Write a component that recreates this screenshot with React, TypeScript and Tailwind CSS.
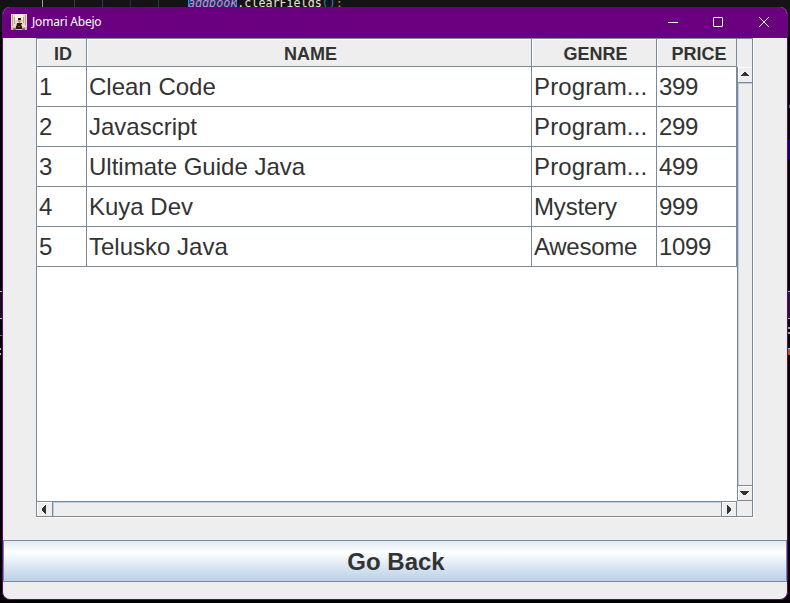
import type { ReactNode } from "react";

const books = [
  { id: 1, name: "Clean Code", genre: "Program...", price: 399, tracking: "tracking-[0.12px]" },
  { id: 2, name: "Javascript", genre: "Program...", price: 299, tracking: "tracking-[0.12px]" },
  { id: 3, name: "Ultimate Guide Java", genre: "Program...", price: 499, tracking: "tracking-[0.12px]" },
  { id: 4, name: "Kuya Dev", genre: "Mystery", price: 999, tracking: "tracking-[-0.15px]" },
  { id: 5, name: "Telusko Java", genre: "Awesome", price: 1099, tracking: "tracking-[-0.28px]" },
];

const columns = "grid grid-cols-[50px_445px_125px_80px]";

function Editor() {
  return (
    <div className="absolute inset-0 bg-black">
      <div className="relative h-8 bg-[#141414]">
        <i className="absolute left-[42px] h-2 w-px bg-[#a0a0a0]" />
        <i className="absolute left-[74px] h-2 w-px bg-[#234a2a]" />
        <i className="absolute left-[102px] h-2 w-px bg-[#1d4468]" />
        <i className="absolute left-[130px] h-2 w-px bg-[#302a55]" />
        <i className="absolute left-[158px] h-2 w-px bg-[#124848]" />
        <div className="absolute left-[188px] top-[-5px] whitespace-pre font-['DejaVu_Sans_Mono',monospace] text-[11.7px] leading-4 text-[#e6e6d0]">
          <span className="bg-[#16334f] italic text-[#d08be8] shadow-[inset_1px_0_#0a9be8,inset_-1px_0_#0a9be8]">addbook</span>.clearFields<span className="text-[#168bb0]">()</span><span className="text-[#d98a52]">;</span>
        </div>
      </div>
      <i className="absolute left-0 top-[291px] h-[28px] w-[2px] border-y border-[#bbb] bg-[#160d20]" />
      <i className="absolute left-0 top-[335px] h-px w-[2px] bg-[#298bb0]" />
      <i className="absolute left-0 top-[348px] h-[7px] w-px border-y-2 border-[#c3bc99]" />
      <i className="absolute right-0 top-[105px] h-[3px] w-px bg-[#49784a]" />
      <i className="absolute right-0 top-[139px] h-5 w-[2px] bg-[#000080]" />
      <i className="absolute right-0 top-[291px] h-7 w-[2px] border-y border-[#bbb] bg-[#221630]" />
      <i className="absolute right-0 top-[327px] h-[7px] w-[2px] border-y-2 border-[#aaa69c]" />
      <i className="absolute right-0 top-[348px] h-[7px] w-[2px] border-t border-[#bbb] bg-[#a65b18]" />
    </div>
  );
}

function TitleBar() {
  return (
    <header className="flex h-[31px] shrink-0 items-start bg-[#6a007f] text-white">
      <svg className="ml-[8px] mt-[7px]" width="16" height="16" viewBox="0 0 16 16" shapeRendering="crispEdges">
        <path fill="#e6dcc4" d="M0 0h16v16H0z" />
        <path fill="#f7f0df" d="M4 0h8v6H4z" />
        <path fill="#b5a68d" d="M1 1h1v11H1zM3 3h1v7H3zM14 1h1v10h-1zM12 3h1v6h-1z" />
        <path fill="#d0baa0" d="M0 13h16v3H0z" />
        <path fill="#8d7260" d="M2 14h3v2H2zM11 14h3v2h-3z" />
        <path fill="#251a1b" d="M7 4h3v2H7zM6 9h5v2H6zM5 11h6v4H5z" />
        <path fill="#ce8a6b" d="M7 6h3v2H7zM8 8h1v1H8zM5 10h1v2H5zM10 10h1v2h-1z" />
        <path fill="#963536" d="M7 12h2v1H7z" />
      </svg>
      <span className="ml-[5px] mt-[7px] font-['Noto_Sans',sans-serif] text-[12px] leading-4 tracking-[-0.2px]">Jomari Abejo</span>
      <svg className="ml-auto mr-[16px] mt-[9px]" width="103" height="12" viewBox="0 0 103 12" fill="none" stroke="white">
        <path d="M0 6.5h10" />
        <rect x="45.5" y="1.5" width="9" height="9" rx=".5" />
        <path d="m91 1 10 10m0-10L91 11" />
      </svg>
    </header>
  );
}

function HeaderCell({ children }: { children: ReactNode }) {
  return (
    <div className="border-b border-r border-[#7a8a99]">
      <div className="flex h-[27px] items-center justify-center border-l border-t border-white pl-[2px] pt-[2px] text-lg font-bold leading-5">{children}</div>
    </div>
  );
}

function Arrow({ d }: { d: string }) {
  return (
    <svg width="13" height="13" viewBox="0 0 13 13" fill="#333" shapeRendering="crispEdges">
      <path d={d} />
    </svg>
  );
}

function BookTable() {
  return (
    <section className="ml-[33px] h-[480px] w-[718px] shrink-0 border-b border-r border-white">
      <div className="flex h-[479px] w-[717px] flex-col border border-[#7a8a99]">
        <div className="flex h-7 shrink-0">
          <div className={`${columns} w-[700px]`}>
            <HeaderCell>ID</HeaderCell>
            <HeaderCell>NAME</HeaderCell>
            <HeaderCell>GENRE</HeaderCell>
            <HeaderCell><span className="pl-[2px]">PRICE</span></HeaderCell>
          </div>
          <div className="flex-1" />
        </div>
        <div className="flex h-[434px] shrink-0">
          <div className="w-[700px] bg-white">
            {books.map((book) => (
              <div key={book.id} className={`${columns} h-10 text-2xl leading-[39px] *:overflow-hidden *:whitespace-nowrap *:border-b *:border-r *:border-[#7a8a99] *:pl-[2px]`}>
                <div>{book.id}</div>
                <div>{book.name}</div>
                <div className={book.tracking}>{book.genre}</div>
                <div className="tracking-[-0.34px]">{book.price}</div>
              </div>
            ))}
          </div>
          <div className="flex w-[15px] flex-col border-l border-[#7a8a99]">
            <div className="h-4 border-b border-[#7a8a99]">
              <div className="h-[15px] border-l border-t border-white">
                <Arrow d="M5 4h2v1h1v1h1v1h1v1H2V7h1V6h1V5h1z" />
              </div>
            </div>
            <div className="flex-1 border-l border-t border-[#b8cfe5]" />
            <div className="h-4 border-y border-[#7a8a99]">
              <div className="h-[14px] border-l border-t border-white">
                <Arrow d="M1 4h9v1H9v1H8v1H7v1H4V7H3V6H2V5H1z" />
              </div>
            </div>
          </div>
        </div>
        <div className="flex h-[15px] shrink-0">
          <div className="flex w-[700px] border-r border-t border-[#7a8a99]">
            <div className="w-4 border-r border-[#7a8a99]">
              <div className="h-[14px] border-l border-t border-white">
                <Arrow d="M7 2h1v9H7v-1H6V9H5V8H4V5h1V4h1V3h1z" />
              </div>
            </div>
            <div className="flex-1 border-l border-t border-[#b8cfe5]" />
            <div className="w-[15px] border-l border-[#7a8a99]">
              <div className="h-[14px] border-l border-t border-white">
                <Arrow d="M4 2h1v1h1v1h1v1h1v3H7v1H6v1H5v1H4z" />
              </div>
            </div>
          </div>
          <div className="flex-1" />
        </div>
      </div>
    </section>
  );
}

export default function App() {
  return (
    <main className="relative h-[603px] w-[790px] overflow-hidden font-['Liberation_Sans',Arial,sans-serif] text-[#333]">
      <Editor />
      <div className="absolute left-[2px] top-[7px] flex h-[593px] w-[786px] flex-col overflow-hidden rounded-[8px] border-x border-b border-[#6a007f] bg-[#eee]">
        <TitleBar />
        <BookTable />
        <button className="mt-[22px] h-[42px] shrink-0 border border-[#7a8a99] bg-[linear-gradient(180deg,#dde8f3_0%,#fff_30%,#dde8f3_60%,#b8cfe5_100%)] bg-origin-border pl-[2px] pt-[2px] text-2xl font-bold leading-[38px]">
          Go Back
        </button>
      </div>
    </main>
  );
}
